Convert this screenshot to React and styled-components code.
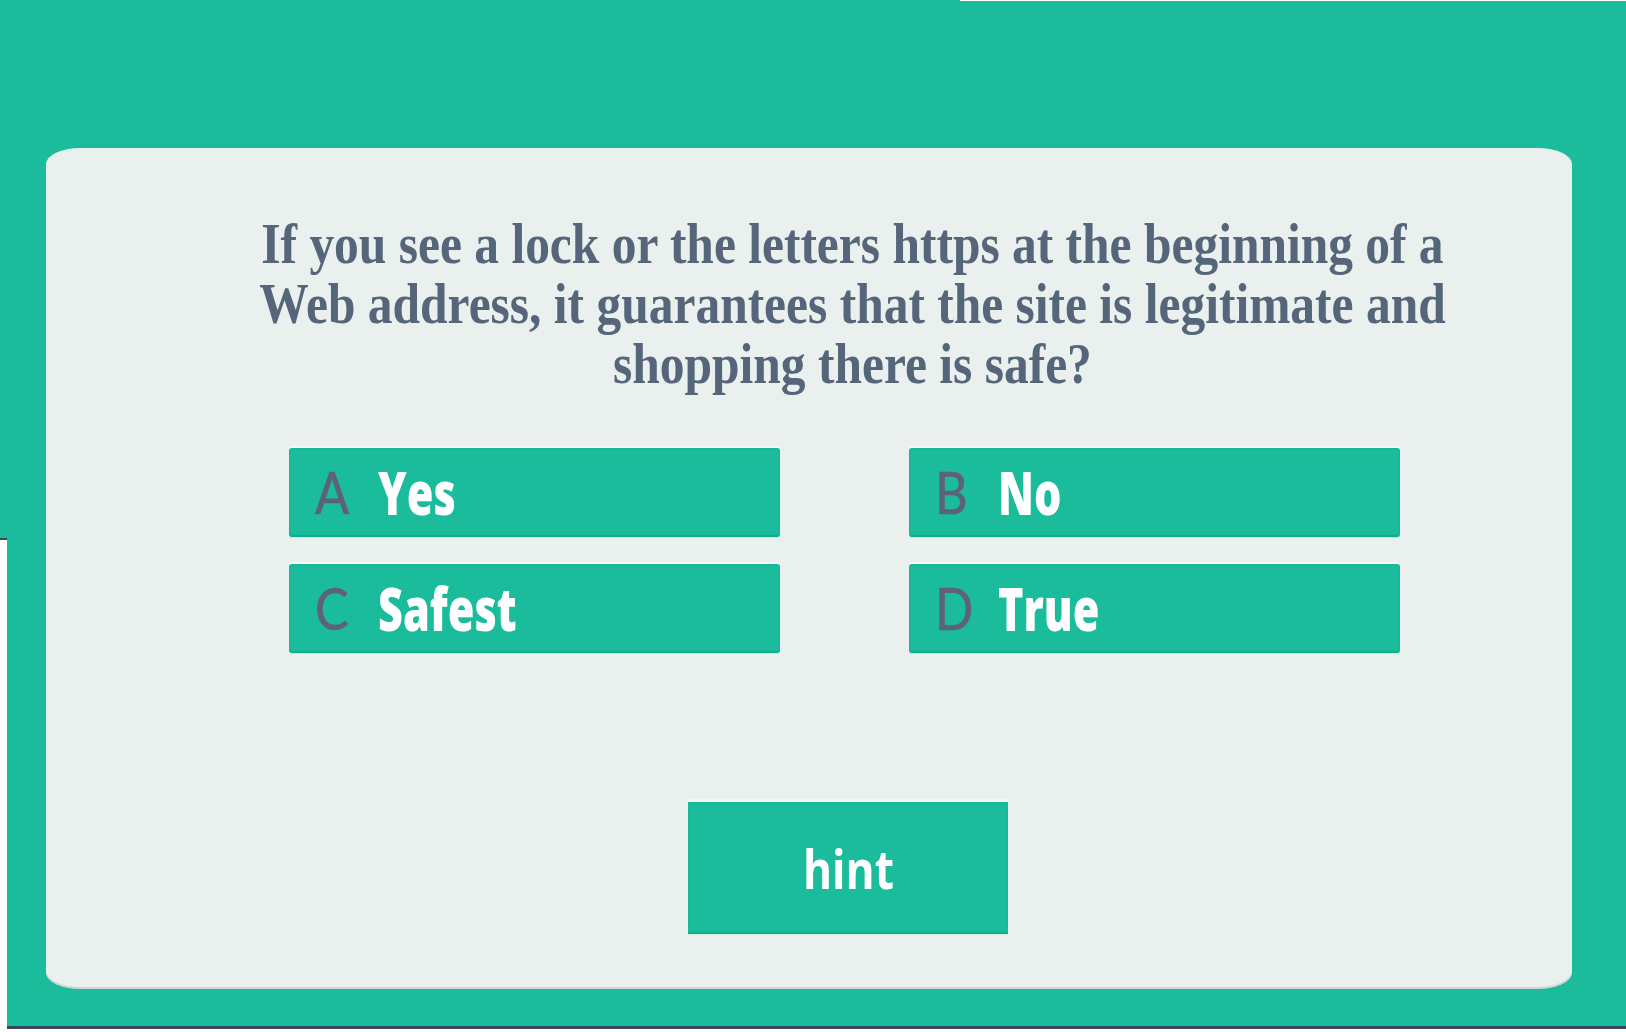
import React from "react";
import styled, { createGlobalStyle } from "styled-components";

const GlobalStyle = createGlobalStyle`
  html, body {
    margin: 0;
    padding: 0;
    background: #1abc9c;
    overflow: hidden;
  }
  * { box-sizing: border-box; }
`;

const Page = styled.div`
  position: relative;
  width: 1626px;
  height: 1032px;
  display: flex;
  flex-direction: column;
  background: #1abc9c;
`;

const Stage = styled.main`
  height: 1026px;
  padding: 148px 54px 0 46px;
`;

const TopEdge = styled.div`
  position: absolute;
  top: 0;
  left: 960px;
  right: 0;
  height: 1px;
  background: #ffffff;
`;

const LeftEdge = styled.div`
  position: absolute;
  left: 0;
  top: 538px;
  bottom: 0;
  width: 7px;
  background: #ffffff;
  border-top: 2px solid #34495e;
`;

const BottomBar = styled.footer`
  height: 6px;
  border-top: 3px solid #34495e;
  background: #ffffff;
`;

const Card = styled.section`
  height: 839px;
  background: #eaf0ee;
  border-radius: 34px / 16px;
  box-shadow: 0 2px 0 #c9d8d3;
  padding: 66px 0 0 74px;
  display: flex;
  flex-direction: column;
  align-items: center;
`;

const Question = styled.h1`
  margin: 0;
  width: max-content;
  font-family: "Liberation Serif", "Times New Roman", serif;
  font-weight: 700;
  font-size: 57px;
  line-height: 60px;
  color: #55667a;
  text-align: center;
  white-space: nowrap;
  transform: translateX(6px) scaleX(0.868);
  transform-origin: center;
`;

const Options = styled.div`
  margin-top: 54px;
  display: grid;
  grid-template-columns: 491px 491px;
  grid-auto-rows: 89px;
  column-gap: 129px;
  row-gap: 27px;
  transform: translateX(-2px);
`;

const Option = styled.button`
  display: flex;
  align-items: center;
  padding: 0 0 0 25px;
  margin: 0;
  background: #1abc9c;
  border: 1px solid #17b694;
  border-bottom: 2px solid #0fae8c;
  border-radius: 3px;
  box-shadow: 0 -2px 0 #fbf6f8, 0 1px 0 #bfe8dd;
  cursor: pointer;
  overflow: hidden;
`;

const Letter = styled.span`
  display: inline-block;
  width: 63px;
  text-align: left;
  font-family: Lato, "Liberation Sans", sans-serif;
  font-weight: 400;
  font-size: 58px;
  line-height: 1;
  color: #5e6279;
  -webkit-text-stroke: 0.6px #5e6279;
  transform: scaleX(0.87);
  transform-origin: left center;
`;

const AnswerText = styled.span`
  display: inline-block;
  font-family: "Open Sans", Lato, "Liberation Sans", sans-serif;
  font-weight: 800;
  font-size: 60px;
  line-height: 1;
  color: #ffffff;
  white-space: nowrap;
  transform: scaleX(${(p) => p.$sx});
  transform-origin: left center;
`;

const HintButton = styled.button`
  margin-top: 149px;
  width: 320px;
  height: 132px;
  padding: 0;
  background: #1abc9c;
  border: 1px solid #17b694;
  border-bottom: 2px solid #10b08e;
  box-shadow: 0 -3px 0 #f4f6f5, 0 1px 0 #c6ebe1;
  display: flex;
  align-items: center;
  justify-content: center;
  cursor: pointer;
  transform: translateX(2px);
`;

const HintLabel = styled.span`
  display: inline-block;
  font-family: "Open Sans", "Liberation Sans", sans-serif;
  font-weight: 700;
  font-size: 54px;
  line-height: 1;
  color: #ffffff;
  transform: scaleX(0.82);
`;

const answers = [
  { letter: "A", text: "Yes", sx: 0.72 },
  { letter: "B", text: "No", sx: 0.72 },
  { letter: "C", text: "Safest", sx: 0.72 },
  { letter: "D", text: "True", sx: 0.72 },
];

export default function App() {
  return (
    <>
      <GlobalStyle />
      <Page>
        <TopEdge />
        <Stage>
          <Card>
            <Question>
              If you see a lock or the letters https at the beginning of a
              <br />
              Web address, it guarantees that the site is legitimate and
              <br />
              shopping there is safe?
            </Question>
            <Options>
              {answers.map((a) => (
                <Option key={a.letter} type="button">
                  <Letter>{a.letter}</Letter>
                  <AnswerText $sx={a.sx}>{a.text}</AnswerText>
                </Option>
              ))}
            </Options>
            <HintButton type="button">
              <HintLabel>hint</HintLabel>
            </HintButton>
          </Card>
        </Stage>
        <BottomBar />
        <LeftEdge />
      </Page>
    </>
  );
}
